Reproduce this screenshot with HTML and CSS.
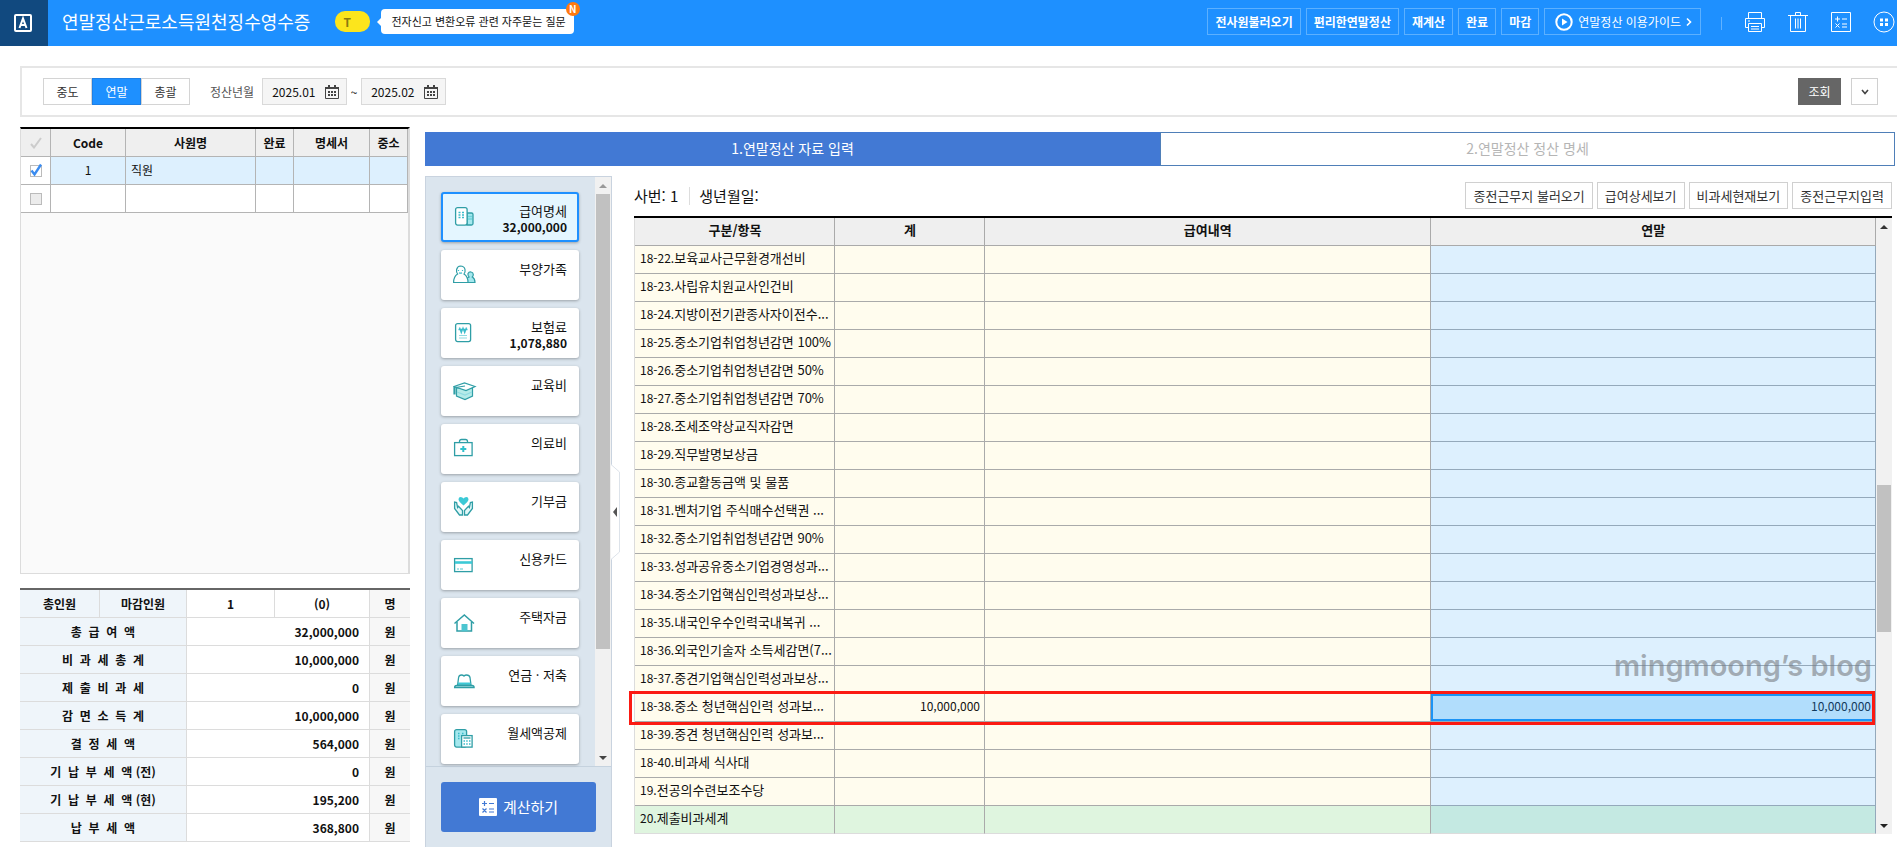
FILE: index.html
```
<!DOCTYPE html>
<html lang="ko">
  <head>
    <meta charset="UTF-8" />
    <meta name="viewport" content="width=device-width, initial-scale=1.0" />
    <title>연말정산근로소득원천징수영수증</title>
    <link rel="stylesheet" href="styles.css">
  </head>
  <body>
    <header class="topbar">
      <div class="logo">
        <svg width="20" height="20" viewBox="0 0 20 20" fill="none" stroke="#fff" stroke-width="2">
          <rect x="2" y="2" width="16" height="16" rx="1" />
          <path d="M6.5 15L10 5.5L13.5 15M7.8 12h4.4" />
        </svg>
      </div>
      <h1>연말정산근로소득원천징수영수증</h1>
      <span class="pill">T</span>
      <a class="bubble" href="#">전자신고 변환오류 관련 자주묻는 질문<span class="new">N</span></a>
      <div class="top-actions">
        <button>전사원불러오기</button>
        <button>편리한연말정산</button>
        <button>재계산</button>
        <button>완료</button>
        <button>마감</button>
        <button class="guide">
          <svg width="18" height="18" viewBox="0 0 18 18">
            <circle cx="9" cy="9" r="7.7" fill="none" stroke="#fff" stroke-width="2" />
            <path d="M7 5.5L12.5 9L7 12.5z" fill="#fff" />
          </svg>
          연말정산 이용가이드
          <svg width="6" height="10" viewBox="0 0 6 10" fill="none" stroke="#fff" stroke-width="1.6"><path d="M1 1.5L4.5 5L1 8.5" /></svg>
        </button>
      </div>
      <span class="divider"></span>
      <div class="top-icons">
        <button class="icon" aria-label="인쇄">
          <svg width="22" height="22" viewBox="0 0 22 22" fill="none" stroke="#fff">
            <path d="M4.500 7V1.500h13V7M4.500 16.500h-3v-9h19v9h-3M4.500 12.500h13v8h-13zM7 15.500h8M7 18h8M4 10h2" />
          </svg>
        </button>
        <button class="icon" aria-label="삭제">
          <svg width="22" height="22" viewBox="0 0 22 22" fill="none" stroke="#fff">
            <path d="M1 4.500h20M8.500 4V1.500h5V4M3.500 4.500v16h15v-16M8.500 7.500v10M11 7.500v10M13.500 7.500v10" />
          </svg>
        </button>
        <button class="icon" aria-label="계산기">
          <svg width="22" height="22" viewBox="0 0 22 22" fill="none" stroke="#fff">
            <path d="M1.500 1.500h19v19h-19zM5 8h5M7.500 5.500v5M12 8h5M5.500 12.500l4 4M9.500 12.500l-4 4M12 13h5M12 16h5" />
          </svg>
        </button>
        <button class="icon" aria-label="더보기">
          <svg width="22" height="22" viewBox="0 0 22 22">
            <circle cx="11" cy="11" r="10" fill="none" stroke="#fff" />
            <path d="M7 7.500h3v3H7zM12 7.500h3v3h-3zM7 12h3v3H7zM12 12h3v3h-3z" fill="#fff" />
          </svg>
        </button>
      </div>
    </header>

    <section class="filter">
      <div class="segment">
        <button>중도</button><button class="on">연말</button><button>총괄</button>
      </div>
      <label for="from">정산년월</label>
      <div class="date">
        <input type="text" id="from" value="2025.01" />
        <svg width="14" height="14" viewBox="0 0 14 14"><path d="M.5 2.500h13v11H.5z" fill="none" stroke="#444" /><path d="M0 2h14v2H0zM3 0h2v3H3zM9 0h2v3H9zM3 6h2v2H3zM6 6h2v2H6zM9 6h2v2H9zM3 9h2v2H3zM6 9h2v2H6zM9 9h2v2H9z" fill="#444" /></svg>
      </div>
      <span class="tilde">~</span>
      <div class="date">
        <input type="text" id="to" value="2025.02" aria-label="정산년월 종료" />
        <svg width="14" height="14" viewBox="0 0 14 14"><path d="M.5 2.500h13v11H.5z" fill="none" stroke="#444" /><path d="M0 2h14v2H0zM3 0h2v3H3zM9 0h2v3H9zM3 6h2v2H3zM6 6h2v2H6zM9 6h2v2H9zM3 9h2v2H3zM6 9h2v2H6zM9 9h2v2H9z" fill="#444" /></svg>
      </div>
      <button class="search">조회</button>
      <button class="more" aria-label="펼치기">
        <svg width="8" height="6" viewBox="0 0 8 6" fill="none" stroke="#444" stroke-width="1.600"><path d="M1 1L4 4.500L7 1" /></svg>
      </button>
    </section>

    <main class="content">
      <div class="left">
        <div class="list">
          <table class="employees">
            <colgroup><col class="e-check" /><col class="e-code" /><col /><col class="e-done" /><col class="e-doc" /><col class="e-small" /></colgroup>
            <thead>
              <tr>
                <th><svg width="12" height="12" viewBox="0 0 12 12" fill="none" stroke="#ccc" stroke-width="2"><path d="M1 7L4 10.500L11 1" /></svg></th>
                <th>Code</th>
                <th>사원명</th>
                <th>완료</th>
                <th>명세서</th>
                <th>중소</th>
              </tr>
            </thead>
            <tbody>
              <tr class="selected">
                <td>
                  <label class="check">
                    <input type="checkbox" aria-label="직원 선택" checked />
                    <svg width="12" height="14" viewBox="0 0 12 14" fill="none" stroke="#3b8cf0" stroke-width="2.400"><path d="M1.500 7.500L4.500 11.500L11 1.500" /></svg>
                  </label>
                </td>
                <td class="center">1</td>
                <td>직원</td>
                <td></td>
                <td></td>
                <td></td>
              </tr>
              <tr>
                <td><label class="check"><input type="checkbox" aria-label="빈 행 선택" /></label></td>
                <td></td>
                <td></td>
                <td></td>
                <td></td>
                <td></td>
              </tr>
            </tbody>
          </table>
        </div>

        <table class="summary">
          <colgroup><col class="s-a" /><col class="s-b" /><col class="s-c" /><col /><col class="s-unit" /></colgroup>
          <tr><th>총인원</th><th>마감인원</th><td class="center">1</td><td class="center">(0)</td><td class="unit">명</td></tr>
          <tr><th colspan="2">총&nbsp; 급&nbsp; 여&nbsp; 액</th><td colspan="2">32,000,000</td><td class="unit">원</td></tr>
          <tr><th colspan="2">비&nbsp; 과&nbsp; 세&nbsp; 총&nbsp; 계</th><td colspan="2">10,000,000</td><td class="unit">원</td></tr>
          <tr><th colspan="2">제&nbsp; 출&nbsp; 비&nbsp; 과&nbsp; 세</th><td colspan="2">0</td><td class="unit">원</td></tr>
          <tr><th colspan="2">감&nbsp; 면&nbsp; 소&nbsp; 득&nbsp; 계</th><td colspan="2">10,000,000</td><td class="unit">원</td></tr>
          <tr><th colspan="2">결&nbsp; 정&nbsp; 세&nbsp; 액</th><td colspan="2">564,000</td><td class="unit">원</td></tr>
          <tr><th colspan="2">기&nbsp; 납&nbsp; 부&nbsp; 세&nbsp; 액 (전)</th><td colspan="2">0</td><td class="unit">원</td></tr>
          <tr><th colspan="2">기&nbsp; 납&nbsp; 부&nbsp; 세&nbsp; 액 (현)</th><td colspan="2">195,200</td><td class="unit">원</td></tr>
          <tr><th colspan="2">납&nbsp; 부&nbsp; 세&nbsp; 액</th><td colspan="2">368,800</td><td class="unit">원</td></tr>
        </table>
      </div>

      <div class="right">
        <nav class="tabs">
          <button class="on">1.연말정산 자료 입력</button>
          <button>2.연말정산 정산 명세</button>
        </nav>

        <div class="work">
          <aside class="panel">
            <div class="menu">
              <div class="cards">
                <button class="card on">
                  <svg width="24" height="24" viewBox="0 0 24 24" fill="none" stroke="#2f9ea6" stroke-width="1.300">
                    <path d="M14 8h4.500q1.500 0 1.500 1.500v9q0 1.500-1.500 1.500H14z" fill="#a5e8ee" />
                    <rect x="2.600" y="2.600" width="11.500" height="17.500" rx="2" fill="#fff" />
                    <path d="M5.500 7.500h2M9 7.500h2M5.500 10h2M9 10h2M5.500 12.500h2M9 12.500h2M15.500 11.500h1M17.500 11.500h1M15.500 14h1M17.500 14h1" stroke="#39bccb" stroke-width="1.500" />
                  </svg>
                  <span>급여명세<b>32,000,000</b></span>
                </button>
                <button class="card">
                  <svg width="24" height="24" viewBox="0 0 24 24" fill="none" stroke="#2f9ea6" stroke-width="1.200">
                    <path d="M13 19.500q0-4 3-5.500q-1.500-1.500-1-3.500q1-1.800 3-1.500q2.200.300 2.300 2.500q0 1.500-1 2.500q2.700 1.500 2.700 5.500z" fill="#a5e8ee" />
                    <path d="M.6 19.500q0-6 4-8.500q-1.500-2-1-4.500Q4.500 3.200 7.500 3q3.500 0 4.500 3.300q.5 2.700-1 4.700q4 2.500 4 8.500z" fill="#fff" />
                    <path d="M5.500 7v1M9.500 7v1M6 9.700q1.500 1 3 0" stroke="#39bccb" />
                  </svg>
                  <span>부양가족</span>
                </button>
                <button class="card">
                  <svg width="24" height="24" viewBox="0 0 24 24" fill="none" stroke="#2f9ea6" stroke-width="1.300">
                    <rect x="2.600" y="2.600" width="15" height="18" rx="2" fill="#fff" />
                    <path d="M6.500 6.500l1.800 5L10 7l1.700 4.500l1.800-5M5.500 8.500h9" stroke="#39bccb" />
                    <path d="M6 14.500h8M6 17h8" stroke="#8fdbe1" stroke-width="1" />
                  </svg>
                  <span>보험료<b>1,078,880</b></span>
                </button>
                <button class="card">
                  <svg width="24" height="24" viewBox="0 0 24 24" fill="none" stroke="#2f9ea6" stroke-width="1.200">
                    <path d="M3.500 9v8L12 20.500l7.500-3.500V9z" fill="#b5ebe8" />
                    <path d="M1 7.500L11.500 4L22 7.500L13 11.500z" fill="#fff" />
                    <path d="M4 13l8 3l7-3" stroke="#8fdbe1" />
                    <path d="M12 7L2.500 8.500" />
                    <path d="M1.500 8v7.500" stroke-width="2.200" />
                  </svg>
                  <span>교육비</span>
                </button>
                <button class="card">
                  <svg width="24" height="24" viewBox="0 0 24 24" fill="none" stroke="#2f9ea6" stroke-width="1.300">
                    <path d="M6.500 6V4.500q0-2 2-2h4q2 0 2 2V6" />
                    <rect x="1.600" y="5.600" width="17.500" height="13" fill="#fff" />
                    <path d="M10.300 9v6M7.300 12h6" stroke="#2fc0cc" stroke-width="2" />
                  </svg>
                  <span>의료비</span>
                </button>
                <button class="card">
                  <svg width="24" height="24" viewBox="0 0 24 24" fill="none" stroke="#2f9ea6" stroke-width="1.300">
                    <path d="M10.500 10.500Q5.500 6.500 5.500 4.300Q5.600 2 7.700 2Q9.500 2 10.500 3.600Q11.500 2 13.300 2Q15.400 2 15.500 4.300Q15.500 6.500 10.500 10.500z" fill="#3cc9d6" stroke="none" />
                    <path d="M1.600 7v6.500L6.500 20h3v-4.500L5.500 11.300L4.600 12.500L3.600 7.500zM19.400 7v6.500L14.500 20h-3v-4.500l4-4.200l.9 1.200l1-5z" fill="#e3f8f9" />
                  </svg>
                  <span>기부금</span>
                </button>
                <button class="card">
                  <svg width="24" height="24" viewBox="0 0 24 24" fill="none" stroke="#2f9ea6" stroke-width="1.300">
                    <rect x="1.600" y="5.600" width="17.500" height="13" fill="#fff" />
                    <path d="M2 9.500h17" stroke="#3cc9d6" stroke-width="2.600" />
                    <path d="M4 16h2M7 16h3" stroke="#8fdbe1" />
                  </svg>
                  <span>신용카드</span>
                </button>
                <button class="card">
                  <svg width="24" height="24" viewBox="0 0 24 24" fill="none" stroke="#2f9ea6" stroke-width="1.500">
                    <path d="M4 11v9h14.500v-9" fill="#fff" />
                    <path d="M8.500 13h6v7h-6z" fill="#4cc5d0" stroke="none" />
                    <path d="M1.500 12.500L11.300 4L21 12.500" />
                  </svg>
                  <span>주택자금</span>
                </button>
                <button class="card">
                  <svg width="24" height="24" viewBox="0 0 24 24" fill="none" stroke="#2f9ea6" stroke-width="1.300">
                    <path d="M4.600 16l1-7.500Q6 6 8.500 6Q10 6 11 7Q12 6 13.500 6Q16.500 6 17 8.500L18 16z" fill="#fff" />
                    <path d="M5 14.500h12.500" stroke="#3cc9d6" stroke-width="2" />
                    <path d="M1.600 18.500q0-2 2-2h15.500q2 0 2 2z" fill="#cdf1f3" />
                  </svg>
                  <span>연금 · 저축</span>
                </button>
                <button class="card">
                  <svg width="24" height="24" viewBox="0 0 24 24" fill="none" stroke="#2f9ea6" stroke-width="1.300">
                    <rect x="1.600" y="2.600" width="12" height="17.500" rx="2" fill="#a5e8ee" />
                    <path d="M5 6.500h1.500M9 6.500h1.500M5 9h1.500M5 11.500h1.500" stroke="#39bccb" stroke-width="1.500" />
                    <rect x="8.600" y="8.600" width="10.500" height="11.500" fill="#fff" />
                    <path d="M10.500 11h7" />
                    <path d="M10.500 14h1.500M13.200 14h1.500M16 14h1.500M10.500 17h1.500M13.200 17h1.500M16 17h1.500" stroke="#39bccb" stroke-width="1.500" />
                  </svg>
                  <span>월세액공제</span>
                </button>
              </div>
              <div class="scroll scroll-menu"><i class="up"></i><div class="thumb"></div><i class="down"></i></div>
            </div>
            <button class="calc">
              <svg width="18" height="18" viewBox="0 0 18 18"><rect width="18" height="18" rx="1" fill="#fff" /><path d="M3 5.500h5M5.500 3v5M10 5.500h5M3.500 10.500l4 4M7.500 10.500l-4 4M10 11h5M10 14h5" fill="none" stroke="#4279d4" stroke-width="1.200" /></svg>
              계산하기
            </button>
            <div class="handle">
              <svg width="9" height="96" viewBox="0 0 9 96"><path d="M0 .5L8.500 8v80L0 95.500" fill="#fff" stroke="#dde3ea" /><path d="M6 43v10L2 48z" fill="#555" /></svg>
            </div>
          </aside>

          <section class="detail">
            <div class="info">
              <span>사번: 1</span>
              <span class="birth">생년월일:</span>
              <div class="info-actions">
                <button>종전근무지 불러오기</button>
                <button>급여상세보기</button>
                <button>비과세현재보기</button>
                <button>종전근무지입력</button>
              </div>
            </div>

            <div class="grid">
              <table class="pay">
                <colgroup><col class="p-item" /><col class="p-sum" /><col /><col /></colgroup>
                <thead>
                  <tr><th>구분/항목</th><th>계</th><th>급여내역</th><th>연말</th></tr>
                </thead>
                <tbody>
                  <tr><td><span>18-22.</span>보육교사근무환경개선비</td><td></td><td></td><td></td></tr>
                  <tr><td><span>18-23.</span>사립유치원교사인건비</td><td></td><td></td><td></td></tr>
                  <tr><td><span>18-24.</span>지방이전기관종사자이전수...</td><td></td><td></td><td></td></tr>
                  <tr><td><span>18-25.</span>중소기업취업청년감면 100%</td><td></td><td></td><td></td></tr>
                  <tr><td><span>18-26.</span>중소기업취업청년감면 50%</td><td></td><td></td><td></td></tr>
                  <tr><td><span>18-27.</span>중소기업취업청년감면 70%</td><td></td><td></td><td></td></tr>
                  <tr><td><span>18-28.</span>조세조약상교직자감면</td><td></td><td></td><td></td></tr>
                  <tr><td><span>18-29.</span>직무발명보상금</td><td></td><td></td><td></td></tr>
                  <tr><td><span>18-30.</span>종교활동금액 및 물품</td><td></td><td></td><td></td></tr>
                  <tr><td><span>18-31.</span>벤처기업 주식매수선택권 ...</td><td></td><td></td><td></td></tr>
                  <tr><td><span>18-32.</span>중소기업취업청년감면 90%</td><td></td><td></td><td></td></tr>
                  <tr><td><span>18-33.</span>성과공유중소기업경영성과...</td><td></td><td></td><td></td></tr>
                  <tr><td><span>18-34.</span>중소기업핵심인력성과보상...</td><td></td><td></td><td></td></tr>
                  <tr><td><span>18-35.</span>내국인우수인력국내복귀 ...</td><td></td><td></td><td></td></tr>
                  <tr><td><span>18-36.</span>외국인기술자 소득세감면(7...</td><td></td><td></td><td></td></tr>
                  <tr><td><span>18-37.</span>중견기업핵심인력성과보상...</td><td></td><td></td><td></td></tr>
                  <tr class="current"><td><span>18-38.</span>중소 청년핵심인력 성과보...</td><td>10,000,000</td><td></td><td>10,000,000</td></tr>
                  <tr><td><span>18-39.</span>중견 청년핵심인력 성과보...</td><td></td><td></td><td></td></tr>
                  <tr><td><span>18-40.</span>비과세 식사대</td><td></td><td></td><td></td></tr>
                  <tr><td><span>19.</span>전공의수련보조수당</td><td></td><td></td><td></td></tr>
                  <tr class="total"><td><span>20.</span>제출비과세계</td><td></td><td></td><td></td></tr>
                </tbody>
              </table>
              <div class="scroll scroll-grid"><i class="up"></i><div class="thumb"></div><i class="down"></i></div>
              <div class="marker"></div>
              <div class="watermark">mingmoong’s blog</div>
            </div>
          </section>
        </div>
      </div>
    </main>
  </body>
</html>
```
FILE: styles.css
```
* {
  box-sizing: border-box;
}
body {
  margin: 0;
  min-height: 100vh;
  display: flex;
  flex-direction: column;
  overflow-x: hidden;
  background: #fff;
  color: #111;
  font-family: "Noto Sans CJK KR", sans-serif;
  font-size: 12px;
  line-height: 18px;
}
button,
input {
  font: inherit;
  color: inherit;
  margin: 0;
}
button {
  padding: 0;
  cursor: pointer;
  white-space: nowrap;
}
svg {
  display: block;
  flex: none;
}
table {
  border-spacing: 0;
  table-layout: fixed;
  width: 100%;
}

/* top bar */
.topbar {
  display: flex;
  align-items: center;
  height: 46px;
  background: #1e90ff;
  color: #fff;
}
.logo {
  width: 48px;
  height: 46px;
  display: flex;
  align-items: center;
  justify-content: center;
  padding-right: 2px;
  background: #11497f;
}
.topbar h1 {
  margin: 0 0 4px 14px;
  font-size: 18px;
  line-height: 26px;
  font-weight: 400;
  white-space: nowrap;
}
.pill {
  width: 35px;
  height: 21px;
  margin: 0 11px 3px 25px;
  padding-left: 8px;
  border-radius: 10px;
  background: #fce51c;
  color: #8a7a10;
  font-weight: 700;
  line-height: 21px;
}
.bubble {
  position: relative;
  height: 25px;
  margin-bottom: 3px;
  padding: 0 8px 0 10px;
  border-radius: 4px;
  background: #fff;
  color: #111;
  font-size: 11px;
  line-height: 25px;
  text-decoration: none;
  white-space: nowrap;
}
.bubble::before {
  content: "";
  position: absolute;
  left: -4px;
  top: 9px;
  border: 4px solid transparent;
  border-left: 0;
  border-right-color: #fff;
}
.new {
  position: absolute;
  right: -6px;
  top: -7px;
  width: 14px;
  height: 14px;
  border-radius: 50%;
  background: #ff7a0f;
  color: #fff;
  font-size: 10px;
  font-weight: 700;
  line-height: 14px;
  text-align: center;
}
.top-actions {
  display: flex;
  gap: 5px;
  margin: 0 20px 3px auto;
}
.top-actions button {
  height: 27px;
  padding: 0 7px;
  border: 1px solid #5cb0ff;
  background: none;
  font-weight: 700;
}
.top-actions .guide {
  display: flex;
  align-items: center;
  gap: 5px;
  padding: 0 8px 0 10px;
  font-weight: 400;
}
.divider {
  width: 1px;
  height: 13px;
  background: #62b2ff;
}
.top-icons {
  display: flex;
  gap: 21px;
  margin: 0 2px 3px 22px;
}
.icon {
  border: 0;
  background: none;
}

/* filter */
.filter {
  display: flex;
  align-items: center;
  height: 51px;
  margin: 20px 0 10px 20px;
  padding: 0 19px 0 21px;
  border: 2px solid #e6e6e6;
  border-right: 0;
}
.segment {
  display: flex;
}
.segment button {
  width: 49px;
  height: 27px;
  border: 1px solid #d4d4d4;
  background: #fff;
  color: #333;
}
.segment .on {
  border-color: #1e80e6;
  background: #1e90ff;
  color: #fff;
}
.filter label {
  margin: 0 8px 0 20px;
  color: #555;
}
.date {
  display: flex;
  align-items: center;
  width: 85px;
  height: 27px;
  padding: 0 7px 0 9px;
  border: 1px solid #d9d9d9;
  background: #f5f5f5;
}
.date input {
  flex: 1;
  min-width: 0;
  padding: 0;
  border: 0;
  background: none;
}
.tilde {
  width: 14px;
  text-align: center;
}
.search {
  width: 43px;
  height: 27px;
  margin-left: auto;
  border: 0;
  background: #666;
  color: #fff;
}
.more {
  width: 27px;
  height: 27px;
  margin-left: 10px;
  display: flex;
  align-items: center;
  justify-content: center;
  border: 1px solid #d0d0d0;
  background: #fff;
}

.content {
  flex: 1;
  display: grid;
  grid-template-columns: 390px 1fr;
  gap: 15px;
  margin-left: 20px;
}

/* left side */
.left {
  display: flex;
  flex-direction: column;
  gap: 14px;
  padding-bottom: 5px;
}
.list {
  flex: 1;
  border: 1px solid #dcdcdc;
  border-right-width: 2px;
  border-top: 2px solid #000;
  background: #fafafa;
}
.employees th,
.employees td {
  height: 28px;
  padding: 0 5px 2px;
  border-right: 1px solid #b4b4b4;
  border-bottom: 1px solid #b4b4b4;
  background: #fff;
}
.employees th {
  padding: 0;
  background: #efefef;
}
.employees th svg {
  margin: 0 auto;
}
.check {
  position: relative;
  display: block;
  width: 12px;
  height: 12px;
  margin: 2px auto 0;
}
.check input {
  display: block;
  width: 12px;
  height: 12px;
  appearance: none;
  border: 1px solid #bbb;
  background: #ececec;
}
.check input:checked {
  background: #fff;
}
.check svg {
  position: absolute;
  left: 0;
  top: -2px;
}
.employees .selected td + td {
  background: #ddf0fe;
}
.e-check {
  width: 30px;
}
.e-code {
  width: 75px;
}
.e-done {
  width: 38px;
}
.e-doc {
  width: 76px;
}
.e-small {
  width: 38px;
}
td.center {
  text-align: center;
}

.summary {
  border-top: 2px solid #666;
  font-weight: 700;
}
.summary th,
.summary td {
  height: 28px;
  padding: 0;
  border-right: 1px solid #dcdcdc;
  border-bottom: 1px solid #dcdcdc;
}
.summary th {
  background: #eff5fa;
}
.summary td {
  padding-right: 10px;
  text-align: right;
}
.summary .center {
  padding: 0;
  text-align: center;
}
.summary .unit {
  padding: 0;
  border-right: 0;
  background: #f7f7f7;
  text-align: center;
}
.s-a {
  width: 80px;
}
.s-b {
  width: 87px;
}
.s-c {
  width: 88px;
}
.s-unit {
  width: 40px;
}

/* right side */
.right {
  display: flex;
  flex-direction: column;
  min-width: 0;
  padding-top: 5px;
}
.tabs {
  display: grid;
  grid-template-columns: 1fr 1fr;
  margin: 0 2px 10px 0;
}
.tabs button {
  height: 34px;
  padding-bottom: 2px;
  border: 1px solid #4f7fb8;
  background: #fff;
  color: #b5b5b5;
  font-size: 14px;
}
.tabs .on {
  border-color: #4279d4;
  background: #4279d4;
  color: #fff;
}
.work {
  flex: 1;
  display: flex;
  gap: 22px;
  padding-right: 5px;
}
.panel {
  position: relative;
  width: 187px;
  border: 1px solid #c9d3df;
  border-bottom: 0;
  background: #dbe5ee;
}
.menu {
  display: flex;
  justify-content: space-between;
  border-bottom: 1px solid #c5d2de;
}
.cards {
  display: flex;
  flex-direction: column;
  gap: 8px;
  padding: 15px 0 2px 15px;
}
.card {
  display: flex;
  justify-content: space-between;
  width: 138px;
  height: 50px;
  padding: 11px 12px 0;
  border: 0;
  border-radius: 3px;
  background: #fff;
  box-shadow: 0 1px 3px rgba(0, 0, 0, 0.3);
  font-size: 13px;
  line-height: 16px;
  text-align: right;
}
.card svg {
  margin-top: 2px;
}
.card.on {
  padding: 9px 10px 0;
  border: 2px solid #1e90ff;
  background: #e4f6ff;
}
.card b {
  display: block;
  font-size: 12px;
}
.scroll {
  display: flex;
  flex-direction: column;
  align-items: center;
  width: 16px;
  background: #f1f1f1;
}
.scroll .thumb {
  width: 14px;
  background: #c1c1c1;
}
.scroll i {
  border: 4px solid transparent;
}
.scroll .up {
  margin: 3px 0 6px;
  border-bottom-color: #999;
}
.scroll .down {
  margin: auto 0 2px;
  border-top-color: #444;
}
.scroll-menu .thumb {
  height: 455px;
}
.calc {
  display: flex;
  align-items: center;
  justify-content: center;
  gap: 6px;
  width: 155px;
  height: 50px;
  margin: 15px;
  border: 0;
  border-radius: 3px;
  background: #4279d4;
  color: #fff;
  font-size: 15px;
}
.handle {
  position: absolute;
  left: 100%;
  top: 287px;
}

.detail {
  flex: 1;
  min-width: 0;
}
.info {
  display: flex;
  align-items: center;
  height: 40px;
  padding-bottom: 1px;
  font-size: 15px;
}
.birth {
  margin-left: 11px;
  padding-left: 9px;
  border-left: 1px solid #ddd;
}
.info-actions {
  display: flex;
  gap: 4px;
  margin-left: auto;
}
.info-actions button {
  height: 27px;
  padding: 0 7px;
  border: 1px solid #d0d0d0;
  background: #fff;
  color: #333;
  font-size: 13px;
}
.grid {
  position: relative;
  display: flex;
  border-top: 2px solid #000;
}
.pay {
  flex: 1;
  border-left: 1px solid #dcdcdc;
}
.pay th,
.pay td {
  height: 28px;
  padding: 0 4px 3px 5px;
  border-right: 1px solid #aaa;
  border-bottom: 1px solid #aaa;
  background: #fffcee;
  text-align: right;
  white-space: nowrap;
  overflow: hidden;
}
.pay th {
  background: #efefef;
  font-size: 13px;
  text-align: center;
}
.pay td:first-child {
  padding-right: 0;
  font-size: 13px;
  text-align: left;
}
.pay td span {
  font-size: 12px;
}
.pay td:last-child {
  border-color: #94a9bb;
  background: #ddf0fe;
}
.pay .current td:last-child {
  background: #b1ddfc;
  color: #123a5c;
  box-shadow: inset 0 0 0 2px #1b93f5;
}
.pay .total td {
  border-bottom-color: #dcdcdc;
  background: #dff5df;
}
.pay .total td:last-child {
  background: #c4e9e2;
}
.p-item {
  width: 200px;
}
.p-sum {
  width: 150px;
}
.scroll-grid .up {
  margin-bottom: 256px;
  border-bottom-color: #333;
}
.scroll-grid .thumb {
  height: 147px;
}
.scroll-grid .down {
  border-top-color: #222;
}

/* highlighted row and blog name lie over the table */
.marker {
  position: absolute;
  left: -5px;
  right: 17px;
  bottom: 109px;
  height: 34px;
  border: 3px solid #fb1a12;
}
.watermark {
  position: absolute;
  right: 20px;
  bottom: 150px;
  color: rgba(120, 125, 130, 0.6);
  font-family: Inter, "Liberation Sans", sans-serif;
  font-size: 29px;
  font-weight: 600;
  line-height: 36px;
}
```
